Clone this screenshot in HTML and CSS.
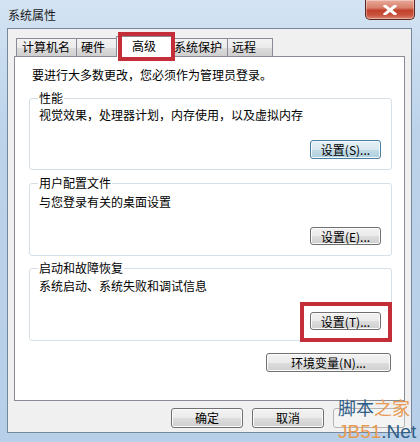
FILE: index.html
```html
<!DOCTYPE html>
<html lang="zh-CN">
<head>
<meta charset="utf-8">
<title>系统属性</title>
<link rel="stylesheet" href="styles.css">
</head>
<body>
<div class="window">
  <div class="titlebar">
    <span class="title">系统属性</span>
    <div class="close"><svg width="14" height="10" viewBox="0 0 14 10"><path d="M2 1 L12 9 M12 1 L2 9" stroke="#fff" stroke-width="3" stroke-linecap="square"/></svg></div>
  </div>
  <div class="dialog">
    <div class="tabs">
      <div class="tab t1">计算机名</div>
      <div class="tab t2">硬件</div>
      <div class="tab active">高级</div>
      <div class="tab t4">系统保护</div>
      <div class="tab t5">远程</div>
    </div>
    <div class="panel">
      <p class="intro">要进行大多数更改，您必须作为管理员登录。</p>
      <div class="group g1">
        <span class="glabel">性能</span>
        <span class="gdesc">视觉效果，处理器计划，内存使用，以及虚拟内存</span>
        <button class="btn focus">设置(S)...</button>
      </div>
      <div class="group g2">
        <span class="glabel">用户配置文件</span>
        <span class="gdesc">与您登录有关的桌面设置</span>
        <button class="btn">设置(E)...</button>
      </div>
      <div class="group g3">
        <span class="glabel">启动和故障恢复</span>
        <span class="gdesc">系统启动、系统失败和调试信息</span>
        <button class="btn">设置(T)...</button>
      </div>
      <button class="btn env">环境变量(N)...</button>
    </div>
    <div class="footer">
      <button class="btn dbtn">确定</button>
      <button class="btn dbtn">取消</button>
      <button class="btn dbtn disabled"></button>
    </div>
  </div>
  <div class="mark mark-tab"></div>
  <div class="mark mark-btn"></div>
  <div class="watermark">
    <div class="wm1"><span class="blue">脚本</span><span class="orange">之家</span></div>
    <div class="wm2"><span class="orange">JB51</span><span class="blue">.Net</span></div>
  </div>
</div>
</body>
</html>
```
FILE: styles.css
```css
* { box-sizing: border-box; }
html, body { margin: 0; padding: 0; }
body {
  width: 420px;
  height: 442px;
  overflow: hidden;
  font-family: "Noto Sans CJK SC", "Liberation Sans", sans-serif;
  font-size: 12px;
  color: #000;
}
.window {
  position: relative;
  width: 420px;
  height: 442px;
  padding: 0 8px 9px 7px;
  background: linear-gradient(180deg, #d3e3f3 0%, #bcd3ea 30%, #b7cfe8 100%);
  display: flex;
  flex-direction: column;
}
.titlebar {
  height: 28px;
  display: flex;
  justify-content: space-between;
  align-items: flex-start;
}
.title {
  margin-top: 7px;
  margin-left: 1px;
  line-height: 16px;
  color: #1b1b1b;
}
.close {
  width: 50px;
  height: 20px;
  margin-right: -3px;
  border: 1px solid #5a2a22;
  border-top: none;
  border-radius: 0 0 5px 5px;
  background: linear-gradient(180deg, #e9a99a 0%, #d9816d 40%, #c1412c 55%, #c9533d 80%, #dc8a74 100%);
  display: flex;
  align-items: center;
  justify-content: center;
  box-shadow: inset 0 0 0 1px rgba(255,255,255,0.35);
}
.dialog {
  flex: 1;
  border: 1px solid #75879a;
  background: #f0f0f0;
  display: flex;
  flex-direction: column;
  padding: 7px 6px 0 6px;
}
.tabs {
  display: flex;
  align-items: flex-end;
  margin-left: 2px;
  height: 20px;
  position: relative;
  z-index: 2;
}
.tab {
  height: 18px;
  line-height: 16px;
  border: 1px solid #898c95;
  border-bottom: none;
  background: linear-gradient(180deg, #f3f3f3 0%, #ebebeb 50%, #dddddd 51%, #cfcfcf 100%);
  padding-left: 5px;
  margin-right: -1px;
  white-space: nowrap;
}
.t1 { width: 61px; }
.t2 { width: 42px; padding-left: 4px; }
.t4 { width: 57px; padding-left: 2px; }
.t5 { width: 46px; padding-left: 4px; }
.tab.active {
  height: 21px;
  width: 56px;
  margin: 0 -1px -1px -1px;
  padding-left: 15px;
  padding-top: 1px;
  background: #fff;
  position: relative;
  z-index: 3;
}
.panel {
  width: 391px;
  height: 345px;
  border: 1px solid #898c95;
  background: #fff;
  display: flex;
  flex-direction: column;
  padding-top: 10px;
}
.intro {
  margin: 0 0 0 17px;
  line-height: 16px;
}
.group {
  margin: 15px 12px 0 14px;
  height: 72px;
  border: 1px solid #d5dfe5;
  border-radius: 3px;
  display: flex;
  flex-direction: column;
  align-items: flex-start;
  padding: 0 10px 10px 8px;
}
.g2 { margin-top: 13px; height: 73px; }
.g3 { margin-top: 12px; height: 73px; }
.glabel {
  margin-top: -9px;
  line-height: 16px;
  background: #fff;
  padding: 0 1px;
}
.gdesc {
  margin-top: 1px;
  line-height: 16px;
  padding-left: 1px;
}
.g2 .gdesc { margin-top: 3px; }
.g3 .gdesc { margin-top: 2px; }
.btn {
  font-family: "Noto Sans CJK SC", "Liberation Sans", sans-serif;
  font-size: 12px;
  color: #000;
  height: 19px;
  line-height: 15px;
  padding: 0;
  border: 1px solid #707070;
  border-radius: 3px;
  background: linear-gradient(180deg, #f2f2f2 0%, #ebebeb 50%, #dddddd 51%, #cfcfcf 100%);
  box-shadow: inset 0 0 0 1px #fbfbfb;
  text-align: center;
}
.group .btn {
  width: 71px;
  margin-top: auto;
  align-self: flex-end;
}
.g2 .btn, .g3 .btn { height: 18px; }
.btn.focus {
  border-color: #4b7ea3;
  background: linear-gradient(180deg, #e6f1f6 0%, #d8e8ef 50%, #c2dbe6 51%, #afcfdd 100%);
  box-shadow: inset 0 0 0 1px #f4fbfe;
}
.env {
  width: 125px;
  margin: 12px 13px 0 auto;
}
.footer {
  display: flex;
  justify-content: flex-end;
  gap: 9px;
  padding-top: 7px;
  padding-right: 0px;
}
.dbtn {
  width: 72px;
  height: 20px;
  line-height: 16px;
}
.dbtn.disabled {
  border-color: #b5b5b5;
  background: #f4f4f4;
  box-shadow: none;
}
.mark {
  position: absolute;
  border: 4px solid #c42e38;
  z-index: 5;
}
.mark-tab { left: 118px; top: 32px; width: 57px; height: 29px; }
.mark-btn { left: 300px; top: 302px; width: 92px; height: 40px; }
.watermark {
  position: absolute;
  left: 338px;
  top: 396px;
  width: 82px;
  z-index: 6;
  font-family: "Noto Sans CJK SC", sans-serif;
}
.wm1 { font-size: 18px; line-height: 22px; height: 26px; white-space: nowrap; }
.wm2 { font-family: "Liberation Sans", sans-serif; font-size: 19px; line-height: 19px; height: 19px; white-space: nowrap; }
.blue { color: #2f5e86; }
.orange { color: #e89a52; }
```
